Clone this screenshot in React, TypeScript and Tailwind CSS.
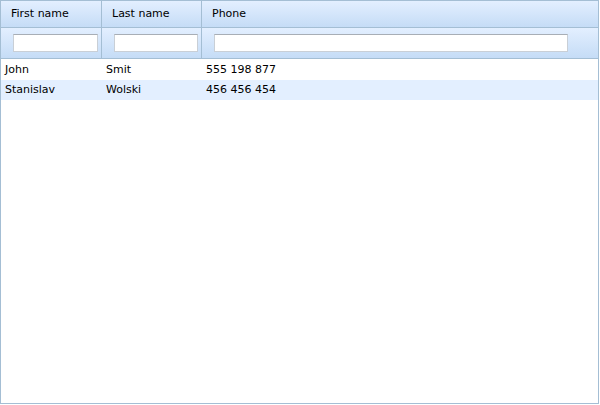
const cols = ['w-[101px]', 'w-[100px]', 'flex-1']

const rows = [
  ['John', 'Smit', '555 198 877'],
  ['Stanislav', 'Wolski', '456 456 454'],
]

export default function App() {
  return (
    <div className="w-[600px] h-[405px] bg-white p-0" style={{ fontFamily: 'Tahoma, "DejaVu Sans", sans-serif' }}>
      <div className="w-[599px] h-[404px] border border-[#a4bed4] flex flex-col text-[11px] text-black">
        <div className="flex h-[27px] border-b border-[#a4bed4] bg-gradient-to-b from-[#e3efff] to-[#c5dcf6]">
          {['First name', 'Last name', 'Phone'].map((h, i) => (
            <div key={h} className={`${cols[i]} flex items-center pl-[10px] ${i < 2 ? 'border-r border-[#a4bed4]' : ''}`}>
              {h}
            </div>
          ))}
        </div>
        <div className="flex h-[31px] border-b border-[#a4bed4] bg-gradient-to-b from-[#e3efff] to-[#c5dcf6]">
          {cols.map((c, i) => (
            <div key={i} className={`${c} flex items-center pl-[12px] ${i < 2 ? 'pr-[3px] border-r border-[#a4bed4]' : 'pr-[30px]'}`}>
              <div className="w-full h-[18px] bg-white border border-[#c9cfd6] border-t-[#a8aeb6]" />
            </div>
          ))}
        </div>
        {rows.map((r, ri) => (
          <div key={ri} className={`flex h-[20px] ${ri === 0 ? 'mt-px' : ''} ${ri % 2 ? 'bg-[#e3efff]' : 'bg-white'}`}>
            {r.map((v, i) => (
              <div key={i} className={`${cols[i]} flex items-center pl-[4px]`}>{v}</div>
            ))}
          </div>
        ))}
      </div>
    </div>
  )
}
